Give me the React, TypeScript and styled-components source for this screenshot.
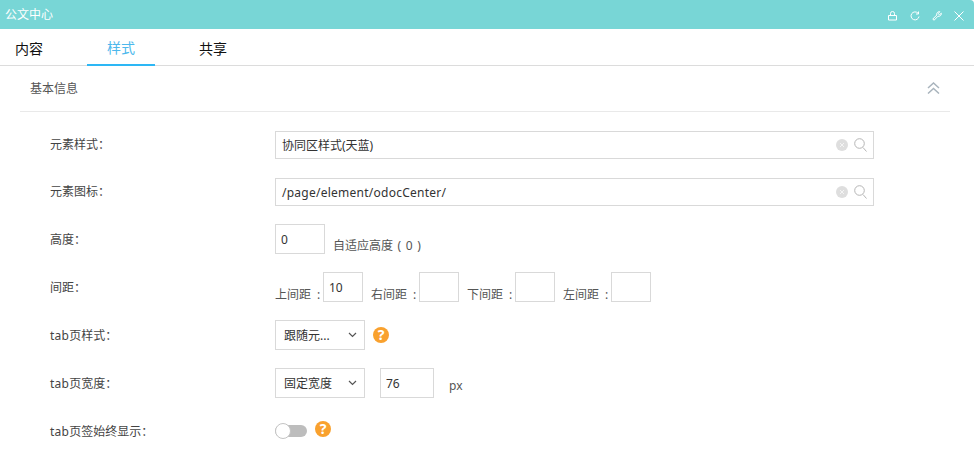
import React from 'react';
import styled, { createGlobalStyle } from 'styled-components';

const Global = createGlobalStyle`
  html, body { margin: 0; padding: 0; background: #fff; }
  body { font-family: "Noto Sans", "Noto Sans CJK SC", sans-serif; font-size: 12px; color: #333; overflow: hidden; }
  * { box-sizing: border-box; }
`;

const Page = styled.div`width: 974px; height: 452px; overflow: hidden; background: #fff;`;
const TitleBar = styled.header`
  height: 29px; background: #78d6d6; display: flex; align-items: center; justify-content: space-between;
  padding: 0 10px 2px 5px; color: #fff; font-size: 12px; border-top-right-radius: 4px;
`;
const TitleTools = styled.div`display: flex; align-items: center; gap: 12px; padding-top: 4px;`;
const TabBar = styled.nav`
  height: 37px; border-bottom: 1px solid #dcdcdc; display: flex; align-items: stretch; padding-left: 15px;
`;
const Tab = styled.div<{ $active?: boolean; $w: number; $left?: boolean }>`
  width: ${p => p.$w}px; font-size: 14px; color: ${p => (p.$active ? '#4db8ec' : '#111')};
  border-bottom: ${p => (p.$active ? '2px solid #2db7f5' : '0')};
  height: 37px; display: flex; align-items: center;
  justify-content: ${p => (p.$left ? 'flex-start' : 'center')};
`;
const Section = styled.section`padding: 0 24px 0 20px;`;
const SectionHead = styled.div`
  height: 46px; border-bottom: 1px solid #e9e9e9; display: flex; align-items: center; justify-content: space-between;
  padding: 0 10px 2px 10px; color: #555; font-size: 12px;
`;
const Form = styled.div`padding: 9px 0 0 30px;`;
const Row = styled.div<{ $h?: number }>`
  height: ${p => p.$h ?? 48}px; display: flex; align-items: center;
`;
const Label = styled.div<{ $raised?: boolean }>`
  width: 225px; flex: none; color: #444; font-size: 12px; padding-bottom: ${p => (p.$raised ? 2 : 0)}px;
`;
const Latin = styled.span`letter-spacing: 0.25px;`;
const Controls = styled.div`display: flex; align-items: center; color: #555;`;
const SearchBox = styled.div`
  width: 599px; height: 28px; border: 1px solid #d9d9d9; display: flex; align-items: center;
  padding: 0 6px 0 6px; gap: 6px; color: #333;
`;
const SearchValue = styled.span`flex: 1;`;
const NumBox = styled.div<{ $w: number; $h?: number }>`
  width: ${p => p.$w}px; height: ${p => p.$h ?? 30}px; border: 1px solid #d9d9d9; color: #333; flex: none;
  padding: 0 5px; display: flex; align-items: center;
`;
const Hint = styled.span`margin-left: 8px; position: relative; top: 6px; color: #555; font-size: 12px; word-spacing: 1.5px;`;
const MarginItem = styled.div`display: flex; align-items: center; margin-right: 8px;`;
const MarginText = styled.span`position: relative; top: 7px; width: 48px; color: #555; font-size: 12px; white-space: pre; word-spacing: 3px;`;
const Select = styled.div<{ $gap?: number }>`
  width: 90px; height: 30px; border: 1px solid #d9d9d9; display: flex; align-items: center; justify-content: space-between;
  padding: 0 7px 0 8px; color: #333; flex: none; margin-right: ${p => p.$gap ?? 8}px;
`;
const Unit = styled.span`margin-left: 15px; position: relative; top: 2px; color: #555;`;
const Help = styled.span<{ $left: number; $top?: number }>`
  width: 16px; height: 16px; border-radius: 50%; background: #f9a12e; color: #fff; font-weight: 700; font-size: 14px; line-height: 16px;
  display: inline-flex; align-items: center; justify-content: center; margin-left: ${p => p.$left}px;
  position: relative; top: ${p => p.$top ?? 0}px;
`;
const Toggle = styled.div`width: 32px; height: 12px; border-radius: 6px; background: #bdbdbd; position: relative; flex: none;`;
const Knob = styled.div`
  position: absolute; left: 0; top: -2px; width: 16px; height: 16px; border-radius: 50%; background: #fff; border: 1px solid #c4c4c4;
`;

const Ico: React.FC<{ children: React.ReactNode }> = ({ children }) => (
  <svg width="10" height="10" viewBox="0 0 10 10" fill="none" stroke="#fff" strokeWidth="1">{children}</svg>
);

const Clear = () => (
  <svg width="12" height="12" viewBox="0 0 12 12">
    <circle cx="6" cy="6" r="6" fill="#dedede" />
    <path d="M4 4l4 4M8 4l-4 4" stroke="#f4f4f4" strokeWidth="1" />
  </svg>
);
const Search = () => (
  <svg width="13" height="14" viewBox="0 0 13 14" fill="none" stroke="#b5b5b5" strokeWidth="1">
    <circle cx="5.5" cy="5.5" r="4.8" />
    <path d="M9 9.5l3.5 4" />
  </svg>
);
const Chevron = () => (
  <svg width="9" height="6" viewBox="0 0 9 6" fill="none" stroke="#555" strokeWidth="1.2"><path d="M1 1l3.5 3.5L8 1" /></svg>
);

const SearchField = ({ value }: { value: React.ReactNode }) => (
  <SearchBox>
    <SearchValue>{value}</SearchValue>
    <Clear />
    <Search />
  </SearchBox>
);

export default function App() {
  return (
    <Page>
      <Global />
      <TitleBar>
        <span>公文中心</span>
        <TitleTools>
          <Ico><path d="M.5 4.5h8v4.500h-8zM2.500 4.500V2.500a2 2 0 0 1 4 0v2" /></Ico>
          <Ico><path d="M8 2.200A4 4 0 1 0 9 5.500M8.500 .5v2.500H6" /></Ico>
          <Ico><path d="M.8 8l4-4a2.600 2.600 0 0 1 3-3.300L6.300 2.300l.4 1 1 .4L9.300 2.200a2.600 2.600 0 0 1-3.300 3L2 9.300z" /></Ico>
          <Ico><path d="M.5.5l9 9M9.500.5l-9 9" /></Ico>
        </TitleTools>
      </TitleBar>
      <TabBar>
        <Tab $w={72} $left>内容</Tab>
        <Tab $w={68} $active>样式</Tab>
        <Tab $w={116}>共享</Tab>
      </TabBar>
      <Section>
        <SectionHead>
          <span>基本信息</span>
          <svg width="13" height="12" viewBox="0 0 13 12" fill="none" stroke="#a9b4bd" strokeWidth="1.5">
            <path d="M1 6L6.500 1 12 6M1 11.500L6.500 6.500 12 11.500" />
          </svg>
        </SectionHead>
        <Form>
          <Row><Label $raised>元素样式：</Label><SearchField value="协同区样式(天蓝)" /></Row>
          <Row $h={46}><Label $raised>元素图标：</Label><SearchField value={<Latin>/page/element/odocCenter/</Latin>} /></Row>
          <Row>
            <Label>高度：</Label>
            <Controls><NumBox $w={50}>0</NumBox><Hint>自适应高度 ( 0 )</Hint></Controls>
          </Row>
          <Row>
            <Label>间距：</Label>
            <Controls>
              <MarginItem><MarginText>上间距 :</MarginText><NumBox $w={40}>10</NumBox></MarginItem>
              <MarginItem><MarginText>右间距 :</MarginText><NumBox $w={40} /></MarginItem>
              <MarginItem><MarginText>下间距 :</MarginText><NumBox $w={40} /></MarginItem>
              <MarginItem><MarginText>左间距 :</MarginText><NumBox $w={40} /></MarginItem>
            </Controls>
          </Row>
          <Row>
            <Label><Latin>tab</Latin>页样式：</Label>
            <Controls><Select>跟随元...<Chevron /></Select><Help $left={0}>?</Help></Controls>
          </Row>
          <Row>
            <Label><Latin>tab</Latin>页宽度：</Label>
            <Controls>
              <Select $gap={15}>固定宽度<Chevron /></Select>
              <NumBox $w={54}>76</NumBox>
              <Unit>px</Unit>
            </Controls>
          </Row>
          <Row>
            <Label><Latin>tab</Latin>页签始终显示：</Label>
            <Controls><Toggle><Knob /></Toggle><Help $left={8} $top={-2}>?</Help></Controls>
          </Row>
        </Form>
      </Section>
    </Page>
  );
}
